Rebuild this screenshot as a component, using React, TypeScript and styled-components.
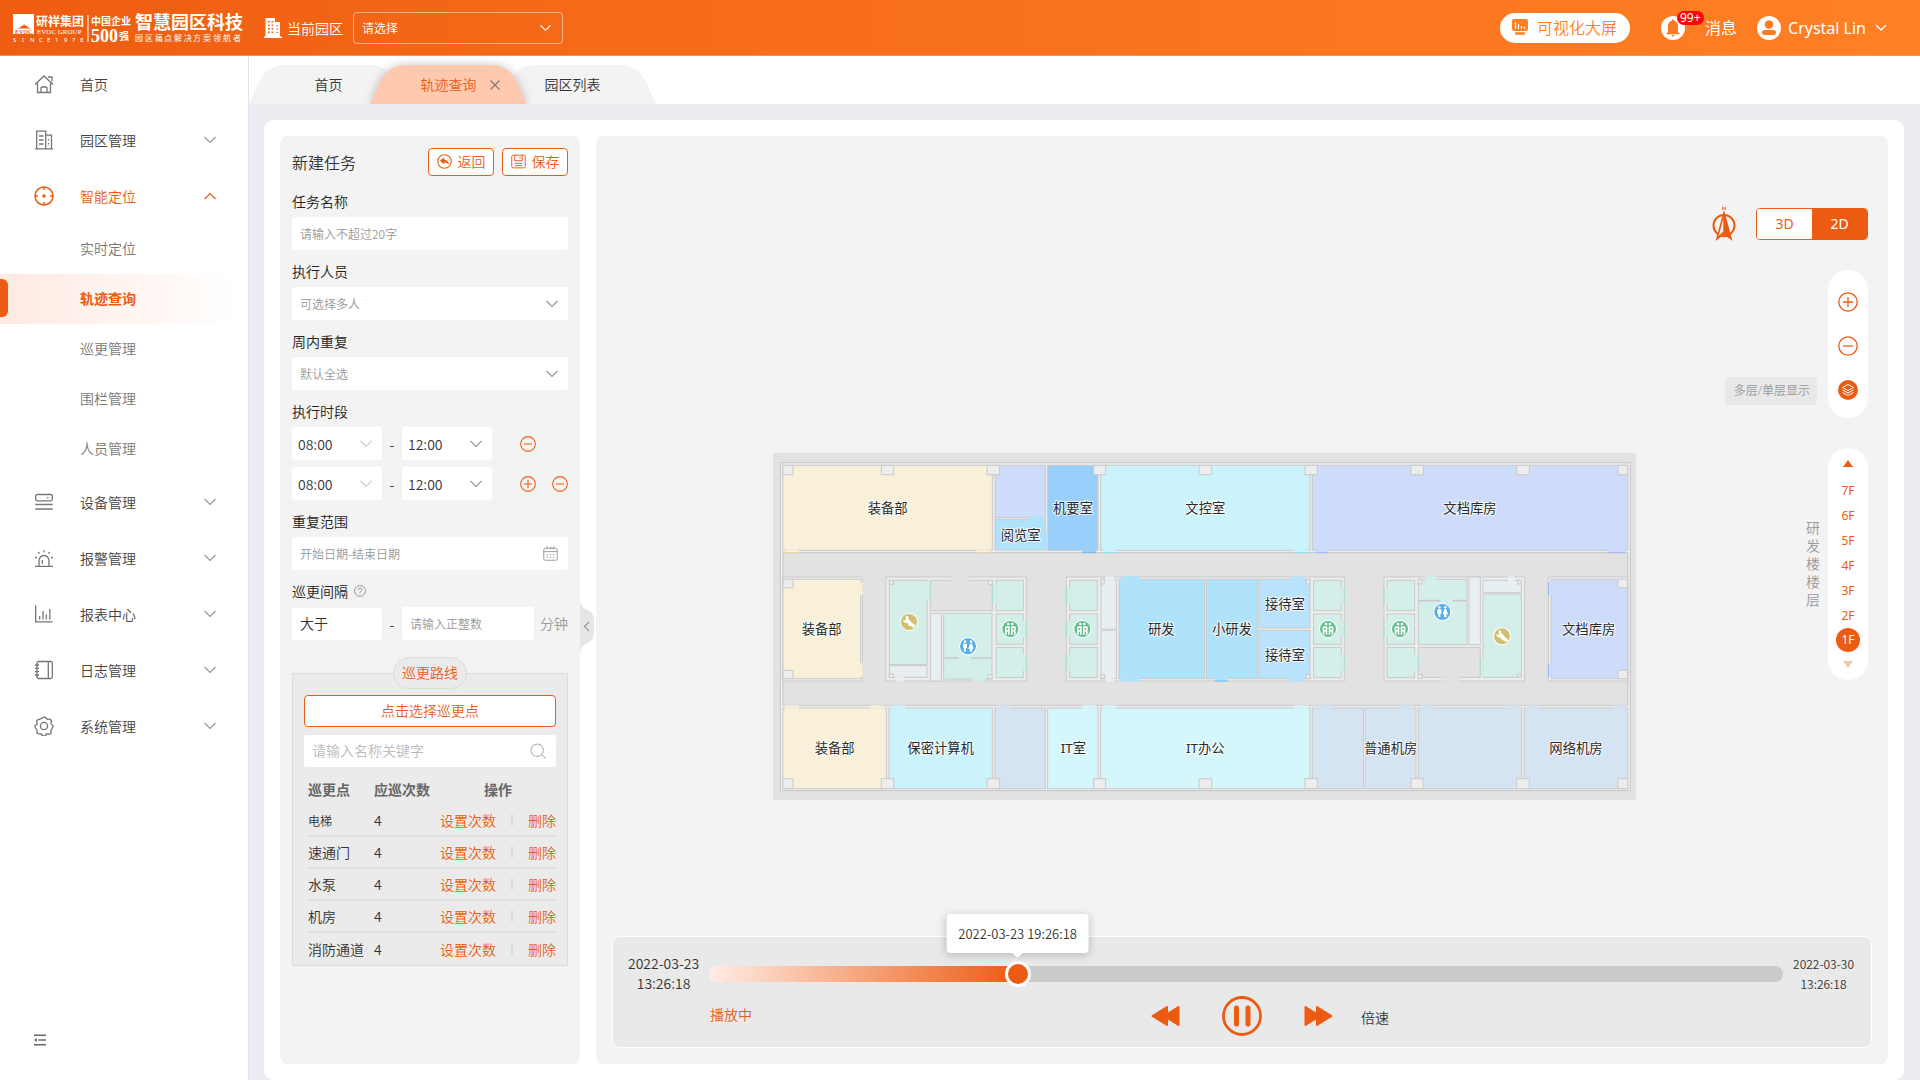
import React, { useState } from "react";
import styled, { createGlobalStyle, css } from "styled-components";

const ORANGE = "#ec5b12";
const CJK = `"Noto Sans CJK SC", "Noto Sans", sans-serif`;
const MIXED = `"Noto Sans", "Noto Sans CJK SC", sans-serif`;

const GlobalStyle = createGlobalStyle`
  * { box-sizing: border-box; }
  body { margin: 0; background: #ecedf2; font-family: ${CJK}; font-size: 14px; font-weight: 350; line-height: 20px; color: #333; }
  button, input, select { font: inherit; color: inherit; margin: 0; }
  button { cursor: pointer; }
  a { color: inherit; text-decoration: none; }
`;

/* ---------- shell ---------- */

const Page = styled.div`
  min-height: 100vh;
  display: flex;
  flex-direction: column;
`;

const Header = styled.header`
  height: 56px;
  flex: none;
  display: flex;
  align-items: center;
  padding: 0 33px 0 13px;
  color: #fff;
  background: linear-gradient(90deg, #ee5d12 0%, #f66a18 32%, #ff8025 100%);
  border-bottom: 1px solid #ff8f4c;
`;

const Logo = styled.svg`
  width: 230px;
  height: 30px;
  margin-right: 21px;
  overflow: visible;
`;

const ParkLabel = styled.label`
  display: flex;
  align-items: center;
  gap: 5px;
  margin-right: 10px;
`;

const ParkPicker = styled.div`
  display: grid;
  width: 210px;
  align-items: center;
  margin-right: auto;
  & > * { grid-area: 1 / 1; }
  & > svg { justify-self: end; margin-right: 12px; pointer-events: none; }
`;

const ParkSelect = styled.select`
  appearance: none;
  width: 100%;
  height: 32px;
  padding: 0 32px 0 8px;
  font-size: 12px;
  background: transparent;
  border: 1px solid rgba(255, 255, 255, 0.5);
  border-radius: 4px;
`;

const ScreenButton = styled.button`
  display: flex;
  align-items: center;
  gap: 9px;
  height: 30px;
  padding: 0 13px 2px 12px;
  border: 0;
  border-radius: 15px;
  background: #fff;
  color: #ff7f24;
  font-size: 16px;
`;

const HeaderLink = styled.a<{ $gap: number; $before: number }>`
  position: relative;
  display: flex;
  align-items: center;
  gap: ${(p) => p.$gap}px;
  margin-left: ${(p) => p.$before}px;
  font-family: ${MIXED};
  font-size: 16px;
  font-weight: 400;
`;

const Badge = styled.span`
  position: absolute;
  left: 16px;
  top: -5px;
  padding: 0 3px;
  border-radius: 7px;
  background: #fb0505;
  font-size: 12px;
  line-height: 14px;
`;

const Body = styled.div`
  flex: 1;
  display: flex;
`;

/* ---------- side bar ---------- */

const Sidebar = styled.nav`
  width: 249px;
  flex: none;
  display: flex;
  flex-direction: column;
  background: #fff;
  border-right: 1px solid #e2e3e8;
`;

const NavItem = styled.a<{ $open?: boolean }>`
  display: grid;
  grid-template-columns: 20px 1fr 12px;
  column-gap: 26px;
  align-items: center;
  height: 56px;
  padding: 0 32px 0 34px;
  color: ${(p) => (p.$open ? ORANGE : "#444")};
  & > svg { color: ${(p) => (p.$open ? ORANGE : "#777")}; }
  & > svg:last-child { color: ${(p) => (p.$open ? ORANGE : "#999")}; }
`;

const SubItem = styled.a<{ $active?: boolean }>`
  display: flex;
  align-items: center;
  height: 50px;
  padding: 0 0 2px 80px;
  color: #777;
  ${(p) =>
    p.$active &&
    css`
      padding-left: 0;
      color: ${ORANGE};
      font-weight: 700;
      background: linear-gradient(90deg, #ffe9e1, #fff 95%);
      &::before {
        content: "";
        width: 8px;
        height: 38px;
        margin-right: 72px;
        border-radius: 0 6px 6px 0;
        background: ${ORANGE};
      }
    `}
`;

const FoldButton = styled.button`
  align-self: flex-start;
  display: flex;
  margin: auto 0 32px 32px;
  padding: 0;
  border: 0;
  background: none;
  color: #666;
`;

/* ---------- tabs ---------- */

const Main = styled.main`
  flex: 1;
  min-width: 0;
  display: flex;
  flex-direction: column;
`;

const TabBar = styled.nav`
  height: 48px;
  display: flex;
  align-items: flex-end;
  background: #fff;
  overflow: hidden;
`;

const Tab = styled.div<{ $active?: boolean; $overlap?: number }>`
  position: relative;
  display: grid;
  width: 157px;
  height: 39px;
  align-items: center;
  z-index: ${(p) => (p.$active ? 1 : 0)};
  margin-left: -${(p) => p.$overlap ?? 0}px;
  color: ${(p) => (p.$active ? ORANGE : "#333")};
  & > * { grid-area: 1 / 1; }
  & > svg {
    fill: ${(p) => (p.$active ? "#ffc9af" : "#f3f3f3")};
    overflow: visible;
    filter: ${(p) => (p.$active ? "drop-shadow(0 0 5px rgba(0,0,0,.22))" : "none")};
  }
`;

const TabText = styled.div<{ $left?: number; $right?: number }>`
  position: relative;
  display: flex;
  justify-content: center;
  align-items: center;
  gap: 12px;
  padding: 0 ${(p) => p.$right ?? 0}px 2px ${(p) => p.$left ?? 0}px;
`;

const CloseButton = styled.button`
  display: flex;
  padding: 2px 0 0;
  border: 0;
  background: none;
  color: #8a7d78;
`;

/* ---------- content ---------- */

const Card = styled.section`
  flex: 1;
  display: flex;
  gap: 16px;
  margin: 16px 16px 0 15px;
  padding: 16px;
  border-radius: 10px;
  background: #fff;
`;

const TaskPanel = styled.form`
  position: relative;
  width: 300px;
  flex: none;
  padding: 12px;
  border-radius: 8px;
  background: #f3f3f3;
`;

const PanelHead = styled.div`
  display: flex;
  align-items: center;
  gap: 8px;
  margin-bottom: 15px;
`;

const PanelTitle = styled.h1`
  margin: 0 auto 0 0;
  font-size: 16px;
  font-weight: inherit;
  line-height: 24px;
`;

const OutlineButton = styled.button<{ $wide?: boolean }>`
  display: flex;
  align-items: center;
  justify-content: center;
  gap: 6px;
  width: ${(p) => (p.$wide ? "100%" : "66px")};
  height: ${(p) => (p.$wide ? "32px" : "28px")};
  padding: 0 0 2px;
  border: 1px solid ${ORANGE};
  border-radius: 4px;
  background: #fff;
  color: ${ORANGE};
`;

const Field = styled.div`
  margin-bottom: 11px;
`;

const FieldLabel = styled.label`
  display: flex;
  align-items: center;
  gap: 6px;
  margin-bottom: 6px;
  color: #222;
  & > svg { color: #999; }
`;

const Control = styled.div<{ $width?: string; $pale?: boolean }>`
  display: grid;
  align-items: center;
  width: ${(p) => p.$width ?? "100%"};
  & > * { grid-area: 1 / 1; }
  & > svg {
    justify-self: end;
    margin-right: 10px;
    color: ${(p) => (p.$pale ? "#ccc" : "#999")};
    pointer-events: none;
  }
`;

const box = css`
  width: 100%;
  min-width: 0;
  height: 33px;
  padding: 0 8px;
  border: 0;
  border-radius: 3px;
  background: #fff;
`;

const TextBox = styled.input<{ $large?: boolean; $faint?: boolean }>`
  ${box}
  height: ${(p) => (p.$large ? "32px" : "33px")};
  padding-bottom: ${(p) => (p.$large ? "2px" : "0")};
  font-size: ${(p) => (p.$large ? "14px" : "12px")};
  &::placeholder { color: ${(p) => (p.$faint ? "#bbb" : "#999")}; opacity: 1; }
`;

const SelectBox = styled.select<{ $time?: boolean }>`
  ${box}
  appearance: none;
  padding: 0 24px 0 ${(p) => (p.$time ? "6px" : "8px")};
  font-size: ${(p) => (p.$time ? "14px" : "12px")};
  color: ${(p) => (p.$time ? "#333" : "#999")};
`;

const Row = styled.div`
  display: flex;
  align-items: center;
  & + & { margin-top: 7px; }
`;

const Dash = styled.span`
  width: 20px;
  text-align: center;
`;

const RowIcons = styled.div`
  display: flex;
  gap: 16px;
  margin-left: 28px;
`;

const IconButton = styled.button`
  display: flex;
  padding: 0;
  border: 0;
  background: none;
  color: ${ORANGE};
`;

const Unit = styled.span`
  margin-left: auto;
  padding-bottom: 2px;
  color: #999;
`;

const RouteBox = styled.section`
  margin-top: 33px;
  padding: 0 11px;
  border: 1px solid #dcdcdc;
  background: #ebebeb;
`;

const RouteTitle = styled.h2`
  width: 74px;
  height: 32px;
  margin: -17px auto 6px;
  border: 1px solid #dcdcdc;
  border-radius: 16px;
  background: #ebebeb;
  color: ${ORANGE};
  font-size: 14px;
  font-weight: inherit;
  line-height: 28px;
  text-align: center;
`;

const SearchControl = styled(Control)`
  margin: 8px 0 6px;
  & > svg { color: #bbb; }
`;

const PointTable = styled.table`
  width: 248px;
  margin-left: 4px;
  table-layout: fixed;
  border-collapse: separate;
  border-spacing: 0;
  th, td { height: 32px; padding: 0; text-align: left; white-space: nowrap; }
  th { color: #666; font-weight: 700; }
  th:first-child, th:nth-child(2) { width: 66px; }
  th:last-child { text-align: center; }
  td { border-bottom: 2px solid #e0e0e0; }
  tr:last-child td { border-bottom: 0; }
`;

const SmallName = styled.span`
  font-size: 12px;
`;

const Actions = styled.div`
  display: flex;
  align-items: center;
  justify-content: space-between;
  & > i { width: 2px; height: 12px; background: #dcdcdc; }
`;

const TextButton = styled.button`
  padding: 0;
  border: 0;
  background: none;
  color: ${ORANGE};
`;

const Handle = styled.button`
  position: absolute;
  left: 100%;
  top: 464px;
  padding: 0;
  border: 0;
  background: none;
  display: flex;
`;

/* ---------- map ---------- */

const MapPanel = styled.section`
  flex: 1;
  min-width: 0;
  display: flex;
  flex-direction: column;
  padding-bottom: 16px;
  border-radius: 8px;
  background: #f3f3f3;
`;

const Stage = styled.div`
  flex: 1;
  display: flex;
`;

const MapArea = styled.div`
  flex: 1;
  min-width: 0;
  display: flex;
  align-items: center;
  justify-content: center;
  padding-top: 181px;
`;

const Plan = styled.svg`
  width: 863px;
  max-width: 100%;
  text {
    font-family: ${MIXED};
    font-size: 40px;
    font-weight: 400;
    fill: #2b2b2b;
    stroke: rgba(255, 255, 255, 0.75);
    stroke-width: 6px;
    paint-order: stroke;
    text-anchor: middle;
  }
`;

const Tools = styled.div`
  width: 75px;
  display: flex;
  flex-direction: column;
  align-items: flex-end;
  gap: 30px;
  padding: 72px 20px 0 0;
  font-family: ${MIXED};
  font-weight: 400;
`;

const ViewRow = styled.div`
  display: flex;
  align-items: center;
  gap: 20px;
  height: 32px;
`;

const ViewSwitch = styled.div`
  display: flex;
  border: 1px solid ${ORANGE};
  border-radius: 4px;
  overflow: hidden;
`;

const ViewButton = styled.button<{ $on?: boolean }>`
  width: 55px;
  height: 30px;
  padding: 0;
  border: 0;
  background: ${(p) => (p.$on ? ORANGE : "#fff")};
  color: ${(p) => (p.$on ? "#fff" : ORANGE)};
`;

const ZoomPill = styled.div`
  position: relative;
  width: 40px;
  display: flex;
  flex-direction: column;
  align-items: center;
  gap: 24px;
  padding: 22px 0 18px;
  border-radius: 20px;
  background: #fff;
`;

const Hint = styled.span`
  position: absolute;
  right: 51px;
  top: 107px;
  padding: 0 7px 0 9px;
  border-radius: 4px;
  background: #e8e8e8;
  color: #999;
  font-size: 12px;
  font-weight: 350;
  line-height: 28px;
  white-space: nowrap;
`;

const FloorRow = styled.div`
  display: flex;
  align-items: center;
  gap: 8px;
`;

const FloorTitle = styled.span`
  width: 14px;
  color: #999;
  font-weight: 350;
  line-height: 18px;
`;

const FloorPill = styled.div`
  width: 40px;
  height: 232px;
  display: flex;
  flex-direction: column;
  align-items: center;
  padding-top: 12px;
  border-radius: 20px;
  background: #fff;
`;

const FloorArrow = styled.button<{ $down?: boolean }>`
  padding: 0;
  margin: ${(p) => (p.$down ? "9px 0 0" : "0 0 11px")};
  width: 10px;
  height: 7px;
  border: 0;
  background: ${ORANGE};
  opacity: ${(p) => (p.$down ? 0.35 : 1)};
  clip-path: ${(p) => (p.$down ? "polygon(0 0, 100% 0, 50% 100%)" : "polygon(50% 0, 100% 100%, 0 100%)")};
`;

const FloorButton = styled.button<{ $on?: boolean }>`
  width: 24px;
  height: ${(p) => (p.$on ? "24px" : "25px")};
  padding: 0;
  border: 0;
  border-radius: 12px;
  font-size: 12px;
  background: ${(p) => (p.$on ? ORANGE : "none")};
  color: ${(p) => (p.$on ? "#fff" : ORANGE)};
`;

/* ---------- player ---------- */

const Player = styled.section`
  margin: 0 16px;
  padding: 16px 17px 11px 15px;
  display: grid;
  row-gap: 1px;
  border: 1px solid #fff;
  border-radius: 8px;
  background: #e9e9e9;
`;

const TrackRow = styled.div`
  display: flex;
  align-items: center;
  gap: 10px;
`;

const Stamp = styled.time<{ $small?: boolean }>`
  display: grid;
  justify-items: center;
  padding-bottom: ${(p) => (p.$small ? "0" : "2px")};
  font-size: ${(p) => (p.$small ? "12px" : "14px")};
`;

const Timeline = styled.div`
  position: relative;
  flex: 1;
  display: flex;
`;

const Slider = styled.input`
  appearance: none;
  width: 100%;
  height: 26px;
  background: none;
  &::-webkit-slider-runnable-track {
    height: 16px;
    border-radius: 8px;
    background: linear-gradient(90deg, #ffede5, ${ORANGE}) 0 0 / var(--played) 100% no-repeat, #cbcbcb;
  }
  &::-webkit-slider-thumb {
    appearance: none;
    width: 26px;
    height: 26px;
    margin-top: -5px;
    border: 3px solid #fff;
    border-radius: 13px;
    background: ${ORANGE};
  }
`;

const Bubble = styled.output`
  position: absolute;
  bottom: 34px;
  transform: translateX(-50%);
  padding: 0 12px;
  border-radius: 4px;
  background: #fff;
  box-shadow: 0 2px 10px rgba(0, 0, 0, 0.22);
  font-size: 13px;
  line-height: 39px;
  white-space: nowrap;
  &::after {
    content: "";
    position: absolute;
    left: 50%;
    top: 100%;
    margin-left: -5px;
    border: 5px solid transparent;
    border-top-color: #fff;
    border-bottom: 0;
  }
`;

const PlayRow = styled.div`
  display: grid;
  grid-template-columns: 1fr auto 1fr;
  align-items: center;
  padding-left: 2px;
`;

const PlayState = styled.span`
  padding: 0 0 4px 80px;
  color: ${ORANGE};
`;

const PlayButtons = styled.div`
  display: flex;
  align-items: center;
  gap: 42px;
`;

const SpeedButton = styled.button`
  justify-self: start;
  margin-left: 28px;
  padding: 2px 0 0;
  border: 0;
  background: none;
`;

/* ---------- icons ---------- */

const Line = ({ size = 20, w = 1.3, children }: { size?: number; w?: number; children: React.ReactNode }) => (
  <svg width={size} height={size} viewBox="0 0 20 20" fill="none" stroke="currentColor" strokeWidth={w} aria-hidden="true">
    {children}
  </svg>
);

const Chevron = ({ up, width = 12 }: { up?: boolean; width?: number }) => (
  <svg width={width} height="8" viewBox="0 0 12 8" fill="none" stroke="currentColor" strokeWidth="1.2" aria-hidden="true">
    <path d={up ? "M.5 7 6 1.5 11.5 7" : "M.5 1 6 6.5 11.5 1"} />
  </svg>
);

const Plus = ({ size = 16 }: { size?: number }) => (
  <Line size={size}>
    <circle cx="10" cy="10" r="9.2" />
    <path d="M5 10h10M10 5v10" />
  </Line>
);

const Minus = ({ size = 16 }: { size?: number }) => (
  <Line size={size}>
    <circle cx="10" cy="10" r="9.2" />
    <path d="M5 10h10" />
  </Line>
);

const navIcons: Record<string, React.ReactNode> = {
  首页: (
    <Line>
      <path d="M1 10.5 10 2l9 8.5M3.5 9v9.5h13V9M14 3h4v4.5M7 18.5V14q0-1 1-1h4q1 0 1 1v4.5" />
    </Line>
  ),
  园区管理: (
    <Line>
      <path d="M1 18.8h18M2.7 18.5V1.2h9v17.3M11.7 5.2h5.8v13.3M5 6h4.5M5 10h4.5M5 14h4.5M14.5 9v1.5M14.5 13v1.5" />
    </Line>
  ),
  智能定位: (
    <Line w={1.5}>
      <circle cx="10" cy="10" r="9" />
      <circle cx="10" cy="10" r="1" fill="currentColor" />
      <path d="M10 1v3M10 16v3M1 10h3M16 10h3" />
    </Line>
  ),
  设备管理: (
    <Line>
      <rect x="1.7" y="2.5" width="16.6" height="6.3" rx="1.5" />
      <path d="M13 5.6h1.6M1.3 12.5h17.4M1.3 17h17.4" />
    </Line>
  ),
  报警管理: (
    <Line>
      <path d="M1 18.3h18M5 18V12.5a5 5 0 0 1 10 0V18M8.3 16v-4M10 2.2v2M4.3 4l1.3 1.5M15.7 4l-1.3 1.5M1 9.5h2M17 9.5h2" />
    </Line>
  ),
  报表中心: (
    <Line>
      <path d="M1.7 1.5v16.3H18.5M5.7 15.5v-3.5M9 15.5V7M12.3 15.5v-5M15.8 15.5V5" />
    </Line>
  ),
  日志管理: (
    <Line>
      <rect x="3" y="1.5" width="15.3" height="17" rx="1.5" />
      <path d="M14.3 1.5v17M1 5h4M1 8.3h4M1 11.7h4M1 15h4" />
    </Line>
  ),
  系统管理: (
    <Line>
      <path d="M10 1q1.3 0 2 1.2t2.3 1q2.2-.1 2.8 1t0 2.4.9 2.2 1 1.8-1 2-1 2 0 2.4-2.8 1-2.3 1-1.9 1-1.9-1-2.3-1-2.8-1 0-2.4-.9-2-1-2 1-1.8.9-2.2 0-2.4 2.8-1 2.3-1T10 1z" />
      <circle cx="10" cy="10" r="3.6" />
    </Line>
  ),
};

const menu = [
  { name: "首页" },
  { name: "园区管理", more: true },
  { name: "智能定位", more: true, children: ["实时定位", "轨迹查询", "巡更管理", "围栏管理", "人员管理"] },
  { name: "设备管理", more: true },
  { name: "报警管理", more: true },
  { name: "报表中心", more: true },
  { name: "日志管理", more: true },
  { name: "系统管理", more: true },
];

const Brand = () => (
  <Logo viewBox="0 0 230 30" fill="#fff" role="img" aria-label="研祥集团 智慧园区科技">
    <path d="M0 1h21v20H0z" />
    <path d="M3 15.500q3-.2 4.500-1.500l2-1.500h1l.6-2 .6 2h1l2 1.500q1.500 1.300 4.300 1.500z" fill={ORANGE} />
    <text x="2" y="20.5" fontSize="6" fontWeight="700" fontFamily="Liberation Serif" fill={ORANGE}>EVOC</text>
    <text x="23" y="13" fontSize="12" fontWeight="700" fontFamily="Noto Sans CJK SC">研祥集团</text>
    <text x="24" y="21" fontSize="7" fontFamily="Liberation Serif">EVOC GROUP</text>
    <text x="0 9 17 26 34 42 51 59 67" y="29" fontSize="6" fontWeight="400" fontFamily="Noto Sans">SINCE1978</text>
    <path d="M74.5 2h1v27h-1z" />
    <text x="78" y="12" fontSize="10" fontWeight="700" fontFamily="Noto Sans CJK SC">中国企业</text>
    <text x="78" y="29" fontSize="18" fontWeight="700" fontFamily="Liberation Serif">500</text>
    <text x="106" y="27" fontSize="10" fontWeight="700" fontFamily="Noto Sans CJK SC">强</text>
    <text x="122" y="16" fontSize="18" fontWeight="700" fontFamily="Noto Sans CJK SC">智慧园区科技</text>
    <text x="122 132 142 151 161 171 180 190 200 210 220" y="28" fontSize="8" fontWeight="400" fontFamily="Noto Sans CJK SC">园区痛点解决方案领航者</text>
  </Logo>
);

/* ---------- floor plan, three units to a pixel ---------- */

type Box = [number, number, number, number, string];
const sand = "#f9f0da", lilac = "#cddcfb", azure = "#99d0fb", sky = "#afe2fb", aqua = "#cbf3fc";
const pool = "#b9e2fc", ice = "#d5f7fb", steel = "#d5e4f3", mint = "#d4efea", fog = "#e8eff2", hall = "#e2e2e2", wall = "#ededed";

const blocks: Box[] = [
  [70, 411, 308, 723, wall], [379, 411, 800, 723, wall], [920, 411, 1754, 723, wall],
  [1873, 411, 2295, 723, wall], [2366, 411, 2604, 723, wall],
];

const rooms: Box[] = [
  [70, 76, 698, 331, sand], [706, 76, 857, 233, lilac], [706, 238, 857, 330, sky], [864, 76, 1015, 331, azure],
  [1023, 76, 1651, 331, aqua], [1658, 76, 2604, 331, lilac],
  [70, 418, 303, 716, sand],
  [389, 421, 502, 674, mint], [389, 677, 502, 712, fog], [512, 421, 698, 512, hall], [512, 520, 545, 723, fog],
  [552, 520, 697, 717, mint], [709, 421, 791, 512, mint], [709, 522, 791, 613, mint], [709, 622, 791, 713, mint],
  [930, 421, 1013, 512, mint], [930, 522, 1013, 613, mint], [930, 622, 1013, 713, mint],
  [1024, 418, 1070, 567, fog], [1024, 571, 1070, 716, fog],
  [1078, 418, 1335, 716, sky], [1340, 418, 1493, 716, sky], [1498, 418, 1651, 564, pool], [1498, 571, 1651, 716, pool],
  [1662, 421, 1745, 512, mint], [1662, 522, 1745, 613, mint], [1662, 622, 1745, 713, mint],
  [1882, 421, 1965, 512, mint], [1882, 522, 1965, 613, mint], [1882, 622, 1965, 713, mint],
  [1976, 418, 2122, 614, mint], [2128, 411, 2162, 614, fog], [1976, 622, 2162, 712, hall],
  [2170, 421, 2285, 458, fog], [2170, 462, 2285, 712, mint],
  [2374, 418, 2604, 716, lilac],
  [70, 804, 380, 1046, sand], [388, 804, 698, 1046, aqua], [706, 804, 857, 1046, steel], [864, 804, 1015, 1046, ice],
  [1023, 804, 1651, 1046, ice], [1658, 804, 1811, 1046, steel], [1817, 804, 1969, 1046, steel],
  [1976, 804, 2286, 1046, steel], [2294, 804, 2604, 1046, steel],
];

const doors: Box[] = [
  [76, 330, 118, 339, sand], [651, 330, 691, 339, sand], [968, 330, 1008, 339, azure], [1030, 330, 1070, 339, aqua],
  [1603, 330, 1645, 339, aqua], [1665, 330, 1705, 339, lilac], [2543, 330, 2597, 339, lilac],
  [809, 231, 850, 240, sky], [856, 282, 865, 324, sky],
  [76, 796, 118, 806, sand], [332, 796, 374, 806, sand], [395, 796, 436, 806, aqua], [712, 796, 753, 806, steel],
  [968, 796, 1010, 806, ice], [1030, 796, 1070, 806, ice], [1603, 796, 1645, 806, ice], [1665, 796, 1720, 806, steel],
  [1920, 796, 1962, 806, steel], [1982, 796, 2023, 806, steel], [2238, 796, 2280, 806, steel],
  [2300, 796, 2341, 806, steel], [2556, 796, 2598, 806, steel],
  [301, 427, 309, 465, sand], [301, 670, 309, 710, sand], [2365, 427, 2376, 465, lilac], [2365, 670, 2376, 710, lilac],
  [1086, 409, 1140, 420, sky], [1086, 714, 1140, 725, sky], [1365, 714, 1405, 725, sky],
  [1593, 409, 1634, 420, pool], [1593, 714, 1634, 725, pool], [1038, 409, 1064, 420, fog], [1038, 714, 1064, 725, fog],
  [574, 409, 628, 423, hall], [2045, 710, 2100, 725, hall], [410, 710, 432, 725, fog], [640, 714, 676, 725, mint],
  [1996, 409, 2030, 420, mint], [2244, 409, 2264, 423, fog],
  [500, 423, 513, 480, mint], [697, 432, 711, 491, mint], [789, 544, 801, 592, mint], [789, 643, 801, 692, mint],
  [919, 443, 932, 491, mint], [919, 544, 932, 592, mint], [919, 643, 932, 692, mint],
  [1743, 443, 1755, 491, mint], [1743, 544, 1755, 592, mint], [1743, 643, 1755, 692, mint],
  [1872, 443, 1884, 491, mint], [1872, 544, 1884, 592, mint], [1963, 643, 1977, 692, mint], [2161, 655, 2172, 710, mint],
];

const columnsX = [[70, 100], [365, 402], [682, 720], [1002, 1038], [1318, 1356], [1636, 1673], [1954, 1991], [2271, 2309], [2575, 2604]];
const pillars: Box[] = [
  ...columnsX.flatMap(([a, b]): Box[] => [[a, 76, b, 104, wall], [a, 1016, b, 1046, wall]]),
  [70, 418, 100, 443, wall], [70, 691, 100, 716, wall], [2575, 418, 2604, 443, wall], [2575, 691, 2604, 716, wall],
  [389, 421, 401, 433, wall], [686, 421, 698, 433, wall], [389, 702, 401, 713, wall], [685, 704, 697, 716, wall],
  [1024, 418, 1034, 432, wall], [1024, 704, 1034, 716, wall], [1640, 418, 1651, 432, wall], [1640, 703, 1651, 716, wall],
  [1976, 418, 1987, 432, wall], [2274, 421, 2285, 432, wall], [1976, 703, 1987, 716, wall], [2274, 702, 2285, 712, wall],
];

const labels: [number, number, string][] = [
  [384, 204, "装备部"], [783, 286, "阅览室"], [940, 204, "机要室"], [1337, 204, "文控室"], [2131, 204, "文档库房"],
  [186, 568, "装备部"], [1205, 568, "研发"], [1417, 568, "小研发"], [1576, 491, "接待室"], [1576, 645, "接待室"],
  [2487, 568, "文档库房"], [225, 923, "装备部"], [543, 923, "保密计算机"], [941, 923, "IT室"], [1337, 923, "IT办公"],
  [1893, 923, "普通机房"], [2449, 923, "网络机房"],
];

const Boxes = ({ items, stroke }: { items: Box[]; stroke?: string }) => (
  <g stroke={stroke} strokeWidth="3">
    {items.map(([x1, y1, x2, y2, fill]) => (
      <rect key={`${x1}-${y1}`} x={x1} y={y1} width={x2 - x1} height={y2 - y1} fill={fill} />
    ))}
  </g>
);

const Marker = ({ x, y, kind }: { x: number; y: number; kind: "lift" | "toilet" | "stairs" }) => (
  <g transform={`translate(${x} ${y})`}>
    <circle r="27" fill="#fff" />
    <circle r="24" fill={kind === "lift" ? "#65bd8e" : kind === "toilet" ? "#54aeea" : "#d0bf72"} />
    {kind === "lift" && (
      <g fill="#fff">
        <circle cx="-6" cy="-15" r="4" /><circle cx="6" cy="-15" r="4" />
        <path d="M-16-8h32v25h-32z" />
        <path d="M-11-3h4v7h-4zM-2-8h4v25h-4zM7-3h4v7h-4zM-11 8h4v9h-4zM7 8h4v9h-4z" fill="#65bd8e" />
      </g>
    )}
    {kind === "toilet" && (
      <g fill="#fff">
        <circle cx="-9" cy="-14" r="4" /><circle cx="9" cy="-14" r="4" />
        <path d="M-15-8h12v14h-3v10h-6V6h-3zM6-8h6l5 15h-4v9H5V7H1z" />
      </g>
    )}
    {kind === "stairs" && (
      <g fill="#fff">
        <circle cx="-6" cy="-14" r="4" />
        <path d="M-19-6-12 3l8 1 4 7 7 2 5 4 7-4-3-6-7-4-5-7-9-9-5 2 1 6z" />
      </g>
    )}
  </g>
);

const FloorPlan = () => (
  <Plan viewBox="40 39 2589 1041" role="img" aria-label="研发楼 1F 平面图">
    <path d="M40 39h2589v1041H40z" fill={hall} />
    <path d="M62 68h2550v984H62z" fill={wall} stroke="#c6c6c6" strokeWidth="3" />
    <path d="M70 338h2534v458H70z" fill={hall} stroke="#c6c6c6" strokeWidth="3" />
    <Boxes items={blocks} stroke="#c9c9c9" />
    <Boxes items={rooms} stroke="#c9c9c9" />
    <Boxes items={doors} />
    <g fill="none" strokeWidth="3">
      <path d="M76 338h42M651 338h40" stroke="#e6cf99" />
      <path d="M968 338h40M1365 723h40" stroke="#6cbdf5" />
      <path d="M1030 338h40M1603 338h42" stroke="#8edcf8" />
      <path d="M1665 338h40M2543 338h54M2366 427v38M2366 670v40" stroke="#9db3ee" />
      <path d="M512 423v57M698 432v59M800 544v48M800 643v49M920 443v48M920 544v48M920 643v49M1754 443v48M1754 544v48M1754 643v49M1873 443v48M1873 544v48M1976 643v49M2162 655v55" stroke="#a9d9cd" />
      <path d="M552 654h45M634 654h63M1976 482h66M2078 482h44" stroke="#c9c9c9" strokeWidth="5" />
    </g>
    <Boxes items={pillars} stroke="#c9c9c9" />
    <Marker x={448} y={546} kind="stairs" />
    <Marker x={625} y={619} kind="toilet" />
    {[752, 968, 1705, 1921].map((x) => <Marker key={x} x={x} y={567} kind="lift" />)}
    <Marker x={2048} y={516} kind="toilet" />
    <Marker x={2227} y={589} kind="stairs" />
    {labels.map(([x, y, name]) => (
      <text key={`${x}-${y}`} x={x} y={y + 15}>{name}</text>
    ))}
  </Plan>
);

/* ---------- page ---------- */

const points = ["电梯", "速通门", "水泵", "机房", "消防通道"];
const floors = ["7F", "6F", "5F", "4F", "3F", "2F", "1F"];

const TabShape = () => (
  <svg viewBox="0 0 157 39" aria-hidden="true">
    <path d="M0 39 10 17Q18 0 36 0H121Q139 0 147 17L157 39Z" />
  </svg>
);

function TimeRange({ id, children }: { id: string; children: React.ReactNode }) {
  return (
    <Row>
      <Control $width="90px" $pale>
        <SelectBox $time id={id} aria-label="开始时间"><option>08:00</option></SelectBox>
        <Chevron />
      </Control>
      <Dash>-</Dash>
      <Control $width="90px">
        <SelectBox $time aria-label="结束时间"><option>12:00</option></SelectBox>
        <Chevron />
      </Control>
      <RowIcons>{children}</RowIcons>
    </Row>
  );
}

export default function App() {
  const [played, setPlayed] = useState(282);
  const [view, setView] = useState("2D");
  const [floor, setFloor] = useState("1F");
  const thumb = `calc(13px + (100% - 26px) * ${played / 1000})`;

  return (
    <Page>
      <GlobalStyle />
      <Header>
        <Brand />
        <ParkLabel htmlFor="park">
          <svg width="18" height="20" viewBox="0 0 18 20" fill="#fff" aria-hidden="true">
            <path fillRule="evenodd" d="M1.5 0H11v4h5v14.5h2V20H0v-1.5h1.5zM4 3v1.5h1.8V3zm3.5 0v1.5h1.8V3zM4 6.5V8h1.8V6.5zm3.5 0V8h1.8V6.5zM4 10v1.5h1.8V10zm3.5 0v1.5h1.8V10zM4 13.5V15h1.8v-1.5zm3.5 0V15h1.8v-1.5zM12.5 7v1.2H14V7zm0 3.5v1.2H14v-1.2zm0 3.5v1.2H14V14z" />
          </svg>
          当前园区
        </ParkLabel>
        <ParkPicker>
          <ParkSelect id="park"><option>请选择</option></ParkSelect>
          <Chevron width={11} />
        </ParkPicker>
        <ScreenButton type="button">
          <svg width="16" height="16" viewBox="0 0 16 16" aria-hidden="true">
            <rect width="16" height="12" rx="2" fill="#ff7f24" />
            <path d="M3.5 3v7M6.5 5v5M9.5 7v3M12.5 8v2" stroke="#fff" strokeWidth="1.2" />
            <path d="M3 14.5h10" stroke="#ff7f24" strokeWidth="2.5" />
          </svg>
          可视化大屏
        </ScreenButton>
        <HeaderLink href="#messages" $gap={20} $before={31}>
          <svg width="24" height="24" viewBox="0 0 24 24" aria-hidden="true">
            <circle cx="12" cy="12" r="12" fill="#fff" />
            <path d="M12 3.5a1.3 1.3 0 0 1 1.3 1.3A5.3 5.3 0 0 1 17 10v6.3l1.5 1v1h-13v-1l1.5-1V10a5.3 5.3 0 0 1 3.7-5.2A1.3 1.3 0 0 1 12 3.5zM10.500 19h3a1.500 1.500 0 0 1-3 0z" fill="#fb7a22" />
          </svg>
          <Badge>99+</Badge>
          消息
        </HeaderLink>
        <HeaderLink href="#profile" $gap={7} $before={20}>
          <svg width="24" height="24" viewBox="0 0 24 24" aria-hidden="true">
            <circle cx="12" cy="12" r="12" fill="#fff" />
            <circle cx="12" cy="8.5" r="4.3" fill="#fd7c22" />
            <rect x="5" y="14" width="14" height="5" rx="2.5" fill="#fd7c22" />
          </svg>
          Crystal Lin
          <svg width="14" height="8" viewBox="0 0 14 8" fill="none" stroke="#fff" strokeWidth="1.3" aria-hidden="true">
            <path d="m3 1 5 5 5-5" />
          </svg>
        </HeaderLink>
      </Header>

      <Body>
        <Sidebar>
          {menu.map((m) => (
            <React.Fragment key={m.name}>
              <NavItem href={`#${m.name}`} $open={!!m.children}>
                {navIcons[m.name]}
                <span>{m.name}</span>
                {m.more && <Chevron up={!!m.children} />}
              </NavItem>
              {m.children?.map((c) => (
                <SubItem key={c} href={`#${c}`} $active={c === "轨迹查询"}>{c}</SubItem>
              ))}
            </React.Fragment>
          ))}
          <FoldButton type="button" aria-label="收起菜单">
            <Line size={16} w={1.8}>
              <path d="M2.5 4h15M8 10h9.5M2.5 16h15" />
              <path d="m6 7.5v5L2.5 10z" fill="currentColor" stroke="none" />
            </Line>
          </FoldButton>
        </Sidebar>

        <Main>
          <TabBar>
            <Tab>
              <TabShape />
              <TabText $left={2}><a href="#home">首页</a></TabText>
            </Tab>
            <Tab $active $overlap={36}>
              <TabShape />
              <TabText $left={24}>
                <a href="#track">轨迹查询</a>
                <CloseButton type="button" aria-label="关闭">
                  <svg width="12" height="12" viewBox="0 0 12 12" stroke="currentColor" strokeWidth="1.4" aria-hidden="true">
                    <path d="m1.5 1.5 9 9M10.5 1.5l-9 9" />
                  </svg>
                </CloseButton>
              </TabText>
            </Tab>
            <Tab $overlap={28}>
              <TabShape />
              <TabText $right={10}><a href="#list">园区列表</a></TabText>
            </Tab>
          </TabBar>

          <Card>
            <TaskPanel onSubmit={(e) => e.preventDefault()}>
              <PanelHead>
                <PanelTitle>新建任务</PanelTitle>
                <OutlineButton type="button">
                  <Line size={15} w={1.5}>
                    <circle cx="10" cy="10" r="9" />
                    <path d="M4 9 9.5 4.3v2.900q5.500.3 6.500 7-2.500-3.200-6.500-3v2.800z" fill="currentColor" stroke="none" />
                  </Line>
                  返回
                </OutlineButton>
                <OutlineButton type="submit">
                  <Line size={15}>
                    <rect x="1" y="1.5" width="18" height="17" rx="2" />
                    <path d="M5 1.5V9h10V1.5M12 3.5V6.5M5 12.5h10M5 15.5h10" />
                  </Line>
                  保存
                </OutlineButton>
              </PanelHead>
              <Field>
                <FieldLabel htmlFor="task">任务名称</FieldLabel>
                <Control><TextBox id="task" placeholder="请输入不超过20字" /></Control>
              </Field>
              <Field>
                <FieldLabel htmlFor="staff">执行人员</FieldLabel>
                <Control>
                  <SelectBox id="staff"><option>可选择多人</option></SelectBox>
                  <Chevron />
                </Control>
              </Field>
              <Field>
                <FieldLabel htmlFor="week">周内重复</FieldLabel>
                <Control>
                  <SelectBox id="week"><option>默认全选</option></SelectBox>
                  <Chevron />
                </Control>
              </Field>
              <Field>
                <FieldLabel htmlFor="period-1">执行时段</FieldLabel>
                <TimeRange id="period-1">
                  <IconButton type="button" aria-label="删除时段"><Minus /></IconButton>
                </TimeRange>
                <TimeRange id="period-2">
                  <IconButton type="button" aria-label="添加时段"><Plus /></IconButton>
                  <IconButton type="button" aria-label="删除时段"><Minus /></IconButton>
                </TimeRange>
              </Field>
              <Field>
                <FieldLabel htmlFor="range">重复范围</FieldLabel>
                <Control>
                  <TextBox id="range" placeholder="开始日期-结束日期" />
                  <Line size={15}>
                    <rect x="1" y="3" width="18" height="16" rx="2" />
                    <path d="M1 7.5h18M5.5 .5v4M10 .5v4M14.5 .5v4M5 11.5h2M9 11.5h2M13 11.5h2M5 15h2M9 15h2M13 15h2" />
                  </Line>
                </Control>
              </Field>
              <Field>
                <FieldLabel htmlFor="gap">
                  巡更间隔
                  <Line size={12} w={1.6}>
                    <circle cx="10" cy="10" r="9.2" />
                    <path d="M7 8q0-3 3-3t3 2.6q0 1.4-1.5 2.2T10 12.5M10 14v1.8" />
                  </Line>
                </FieldLabel>
                <Row>
                  <Control $width="90px"><TextBox $large aria-label="比较方式" defaultValue="大于" /></Control>
                  <Dash>-</Dash>
                  <Control $width="132px"><TextBox id="gap" placeholder="请输入正整数" /></Control>
                  <Unit>分钟</Unit>
                </Row>
              </Field>

              <RouteBox>
                <RouteTitle>巡更路线</RouteTitle>
                <OutlineButton type="button" $wide>点击选择巡更点</OutlineButton>
                <SearchControl>
                  <TextBox $large $faint type="text" aria-label="搜索巡更点" placeholder="请输入名称关键字" />
                  <Line size={16} w={1.5}>
                    <circle cx="9" cy="9" r="7.7" />
                    <path d="m14.5 14.5 5 4.5" />
                  </Line>
                </SearchControl>
                <PointTable>
                  <thead>
                    <tr><th>巡更点</th><th>应巡次数</th><th>操作</th></tr>
                  </thead>
                  <tbody>
                    {points.map((p, i) => (
                      <tr key={p}>
                        <td>{i === 0 ? <SmallName>{p}</SmallName> : p}</td>
                        <td>4</td>
                        <td>
                          <Actions>
                            <TextButton type="button">设置次数</TextButton>
                            <i />
                            <TextButton type="button">删除</TextButton>
                          </Actions>
                        </td>
                      </tr>
                    ))}
                  </tbody>
                </PointTable>
              </RouteBox>

              <Handle type="button" aria-label="收起面板">
                <svg width="14" height="53" viewBox="0 0 14 53" aria-hidden="true">
                  <path d="M0 0Q1 8 8 10 14 13 14 20V33Q14 40 8 43 1 45 0 53Z" fill="#e6e6e6" />
                  <path d="M9 22 4.5 26.5 9 31" fill="none" stroke="#999" strokeWidth="1.3" />
                </svg>
              </Handle>
            </TaskPanel>

            <MapPanel>
              <Stage>
                <MapArea><FloorPlan /></MapArea>
                <Tools>
                  <ViewRow>
                    <svg width="24" height="36" viewBox="0 0 24 36" aria-hidden="true">
                      <circle cx="12" cy="19.5" r="10.5" fill="none" stroke={ORANGE} strokeWidth="2" />
                      <path d="M12 4 20.5 35 12 28.5 3.5 35Z" fill={ORANGE} />
                      <path d="M11.3 13v12.5L6.5 30Z" fill="#f3f3f3" />
                      <path d="M10.6 4V.8L13.4 4V.8" fill="none" stroke={ORANGE} strokeWidth=".8" />
                    </svg>
                    <ViewSwitch>
                      {["3D", "2D"].map((v) => (
                        <ViewButton key={v} type="button" $on={v === view} onClick={() => setView(v)}>{v}</ViewButton>
                      ))}
                    </ViewSwitch>
                  </ViewRow>
                  <ZoomPill>
                    <IconButton type="button" aria-label="放大"><Plus size={20} /></IconButton>
                    <IconButton type="button" aria-label="缩小"><Minus size={20} /></IconButton>
                    <IconButton type="button" aria-label="多层/单层显示">
                      <svg width="20" height="20" viewBox="0 0 20 20" aria-hidden="true">
                        <circle cx="10" cy="10" r="10" fill={ORANGE} />
                        <path d="M10 4.5 15.5 7.5 10 10.5 4.5 7.5ZM4.5 10 10 13l5.5-3M4.5 12.5 10 15.5l5.5-3" fill="none" stroke="#fff" />
                      </svg>
                    </IconButton>
                    <Hint>多层/单层显示</Hint>
                  </ZoomPill>
                  <FloorRow>
                    <FloorTitle>研发楼楼层</FloorTitle>
                    <FloorPill>
                      <FloorArrow type="button" aria-label="上一层" />
                      {floors.map((f) => (
                        <FloorButton key={f} type="button" $on={f === floor} onClick={() => setFloor(f)}>{f}</FloorButton>
                      ))}
                      <FloorArrow type="button" $down aria-label="下一层" />
                    </FloorPill>
                  </FloorRow>
                </Tools>
              </Stage>

              <Player>
                <TrackRow>
                  <Stamp><span>2022-03-23</span><span>13:26:18</span></Stamp>
                  <Timeline>
                    <Slider
                      type="range"
                      min={0}
                      max={1000}
                      value={played}
                      aria-label="播放进度"
                      onChange={(e) => setPlayed(Number(e.target.value))}
                      style={{ "--played": thumb } as React.CSSProperties}
                    />
                    <Bubble style={{ left: thumb }}>2022-03-23 19:26:18</Bubble>
                  </Timeline>
                  <Stamp $small><span>2022-03-30</span><span>13:26:18</span></Stamp>
                </TrackRow>
                <PlayRow>
                  <PlayState>播放中</PlayState>
                  <PlayButtons>
                    <IconButton type="button" aria-label="快退">
                      <svg width="29" height="20" viewBox="0 0 29 20" fill={ORANGE} stroke={ORANGE} strokeWidth="2" strokeLinejoin="round" aria-hidden="true">
                        <path d="M1.5 10 16 1v18zM13 10 27.5 1v18z" />
                      </svg>
                    </IconButton>
                    <IconButton type="button" aria-label="暂停">
                      <svg width="40" height="40" viewBox="0 0 40 40" fill="none" stroke={ORANGE} aria-hidden="true">
                        <circle cx="20" cy="20" r="18.5" strokeWidth="2.8" />
                        <path d="M14.5 12v16M26 12v16" strokeWidth="5" strokeLinecap="round" />
                      </svg>
                    </IconButton>
                    <IconButton type="button" aria-label="快进">
                      <svg width="29" height="20" viewBox="0 0 29 20" fill={ORANGE} stroke={ORANGE} strokeWidth="2" strokeLinejoin="round" aria-hidden="true">
                        <path d="M27.5 10 13 1v18zM16 10 1.5 1v18z" />
                      </svg>
                    </IconButton>
                  </PlayButtons>
                  <SpeedButton type="button">倍速</SpeedButton>
                </PlayRow>
              </Player>
            </MapPanel>
          </Card>
        </Main>
      </Body>
    </Page>
  );
}
